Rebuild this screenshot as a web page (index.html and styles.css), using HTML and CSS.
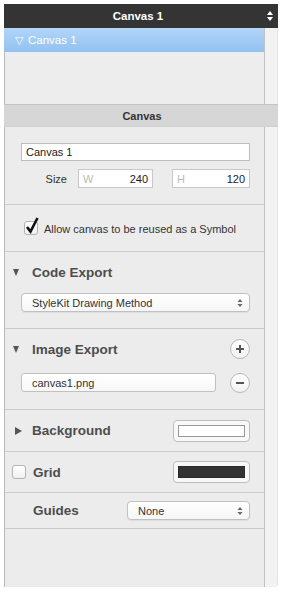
FILE: index.html
```html
<!DOCTYPE html>
<html>
<head>
<meta charset="utf-8">
<link rel="stylesheet" href="styles.css">
</head>
<body>
<div class="panel">
  <div class="titlebar">
    <span class="title">Canvas 1</span>
    <svg class="title-arrows" width="6" height="10" viewBox="0 0 6 10"><path d="M3 0 L6 4 L0 4 Z M0 6 L6 6 L3 10 Z" fill="#ffffff"/></svg>
  </div>
  <div class="outline-wrap">
    <div class="outline">
      <div class="outline-row"><span class="open-tri">▽</span><span>Canvas 1</span></div>
    </div>
    <div class="gutter"></div>
  </div>
  <div class="section-header">Canvas</div>
  <div class="inspector-wrap">
    <div class="inspector">
      <div class="sec sec-name">
        <div class="text-field">Canvas 1</div>
        <div class="size-row">
          <span class="size-label">Size</span>
          <div class="num-field w"><span class="ph">W</span><span>240</span></div>
          <div class="num-field h"><span class="ph">H</span><span>120</span></div>
        </div>
      </div>
      <div class="sec sec-check">
        <span class="checkbox checked">
          <svg width="16" height="18" viewBox="0 0 16 18"><path d="M3 10 L6.5 14.5 L13.5 1" fill="none" stroke="#111" stroke-width="2.6" stroke-linejoin="miter"/></svg>
        </span>
        <span class="check-label">Allow canvas to be reused as a Symbol</span>
      </div>
      <div class="sec sec-code">
        <div class="sec-title"><span class="tri-down"></span><span>Code Export</span></div>
        <div class="select wide"><span>StyleKit Drawing Method</span>
          <svg width="6" height="10" viewBox="0 0 6 10"><path d="M3 1 L5.5 4 L0.5 4 Z M0.5 6 L5.5 6 L3 9 Z" fill="#666"/></svg>
        </div>
      </div>
      <div class="sec sec-image">
        <div class="sec-title"><span class="tri-down"></span><span class="grow">Image Export</span><span class="round-btn">
          <svg width="10" height="10" viewBox="0 0 10 10"><path d="M5 1 V9 M1 5 H9" stroke="#555" stroke-width="2"/></svg></span></div>
        <div class="file-row"><div class="file-field">canvas1.png</div><span class="round-btn">
          <svg width="10" height="10" viewBox="0 0 10 10"><path d="M1 5 H9" stroke="#555" stroke-width="2"/></svg></span></div>
      </div>
      <div class="sec sec-bg">
        <span class="tri-right"></span><span class="big-label grow">Background</span>
        <span class="well"><span class="well-inner white"></span></span>
      </div>
      <div class="sec sec-grid">
        <span class="checkbox"></span><span class="big-label grow">Grid</span>
        <span class="well"><span class="well-inner dark"></span></span>
      </div>
      <div class="sec sec-guides">
        <span class="big-label guides-label">Guides</span>
        <div class="select guides"><span>None</span>
          <svg width="6" height="10" viewBox="0 0 6 10"><path d="M3 1 L5.5 4 L0.5 4 Z M0.5 6 L5.5 6 L3 9 Z" fill="#666"/></svg>
        </div>
      </div>
      <div class="filler"></div>
    </div>
    <div class="gutter bottom"></div>
  </div>
</div>
</body>
</html>
```
FILE: styles.css
```css
* { box-sizing: border-box; }
html, body { margin: 0; padding: 0; background: #ffffff; }
body {
  font-family: "Liberation Sans", Arial, sans-serif;
  font-size: 11px;
  color: #333;
}
.panel {
  margin: 4px 0 0 4px;
  width: 274px;
}
.titlebar {
  height: 24px;
  background: #343434;
  display: flex;
  align-items: center;
  justify-content: center;
  padding-right: 6px;
  position: relative;
}
.title {
  color: #fff;
  font-weight: bold;
  font-size: 11.5px;
}
.title-arrows {
  position: absolute;
  right: 5px;
  top: 7px;
}
.outline-wrap, .inspector-wrap {
  display: flex;
}
.outline {
  width: 261px;
  height: 76px;
  background: #ededed;
  border-left: 1px solid #b9b9b9;
  border-right: 1px solid #c2c2c2;
}
.outline-row {
  height: 24px;
  margin-left: -1px;
  background: linear-gradient(#b2d5f8, #92c1f1);
  color: #fff;
  font-size: 11.5px;
  display: flex;
  align-items: center;
  padding-left: 11px;
  gap: 5px;
}
.open-tri { font-size: 11px; }
.gutter {
  width: 13px;
  background: #f2f2f2;
  border-right: 1px solid #e6e6e6;
}
.gutter.bottom { border-bottom-right-radius: 4px; }
.section-header {
  height: 23px;
  background: #d6d6d6;
  border-top: 1px solid #c4c4c4;
  border-bottom: 1px solid #cfcfcf;
  display: flex;
  align-items: center;
  justify-content: center;
  font-weight: bold;
  color: #333;
  padding-left: 2px;
}
.inspector {
  width: 261px;
  background: #ececec;
  border-left: 1px solid #b9b9b9;
  border-right: 1px solid #c2c2c2;
  display: flex;
  flex-direction: column;
}
.sec {
  border-bottom: 1px solid #cacaca;
  padding: 0 14px 0 16px;
}
.sec-name {
  height: 78px;
  padding-top: 16px;
  display: flex;
  flex-direction: column;
  gap: 8px;
}
.text-field {
  height: 18px;
  background: #fff;
  border: 1px solid #bdbdbd;
  padding-left: 4px;
  display: flex;
  align-items: center;
  color: #222;
}
.size-row {
  display: flex;
  justify-content: flex-end;
  align-items: center;
  height: 19px;
}
.size-label { margin-right: 11px; color: #333; }
.num-field {
  height: 19px;
  background: #fff;
  border: 1px solid #c8c8c8;
  display: flex;
  align-items: center;
  justify-content: space-between;
  padding: 0 4px 0 4px;
  color: #222;
}
.num-field.w { width: 75px; margin-right: 19px; }
.num-field.h { width: 78px; }
.ph { color: #bbb; }
.sec-check {
  height: 47px;
  display: flex;
  align-items: center;
  padding-left: 19px;
  gap: 6px;
}
.checkbox {
  width: 14px;
  height: 14px;
  border: 1px solid #b3b3b3;
  border-radius: 3px;
  background: linear-gradient(#ffffff, #f0f0f0);
  position: relative;
  flex: none;
}
.checkbox svg {
  position: absolute;
  left: -1px;
  top: -5px;
}
.check-label { color: #333; margin-top: 1px; }
.sec-title {
  height: 20px;
  display: flex;
  align-items: center;
  padding-left: 0;
  margin-left: -8px;
  font-size: 13.5px;
  font-weight: bold;
  color: #4d4d4d;
}
.tri-down {
  width: 0; height: 0;
  border-left: 3.5px solid transparent;
  border-right: 3.5px solid transparent;
  border-top: 7px solid #555;
  margin-right: 13px;
}
.tri-right {
  width: 0; height: 0;
  border-top: 4px solid transparent;
  border-bottom: 4px solid transparent;
  border-left: 7px solid #555;
  margin-left: -6px;
  margin-right: 10px;
}
.grow { flex: 1; }
.sec-code {
  height: 77px;
  padding-top: 10px;
  display: flex;
  flex-direction: column;
  gap: 11px;
}
.select {
  height: 19px;
  background: linear-gradient(#ffffff, #f6f6f6);
  border: 1px solid #c0c0c0;
  border-radius: 4px;
  box-shadow: 0 1px 0 rgba(0,0,0,0.06);
  display: flex;
  align-items: center;
  justify-content: space-between;
  padding: 0 6px 0 10px;
  color: #333;
}
.sec-image {
  height: 81px;
  padding-top: 10px;
  display: flex;
  flex-direction: column;
  gap: 14px;
}
.round-btn {
  width: 20px;
  height: 20px;
  border-radius: 50%;
  border: 1px solid #b8b8b8;
  background: linear-gradient(#ffffff, #f2f2f2);
  display: flex;
  align-items: center;
  justify-content: center;
  flex: none;
}
.file-row {
  display: flex;
  align-items: center;
  justify-content: space-between;
  height: 19px;
}
.file-field {
  width: 195px;
  height: 19px;
  border: 1px solid #c0c0c0;
  border-radius: 3px;
  background: linear-gradient(#ffffff, #f7f7f7);
  display: flex;
  align-items: center;
  padding-left: 10px;
  color: #333;
}
.big-label {
  font-size: 13.5px;
  font-weight: bold;
  color: #4d4d4d;
}
.sec-bg {
  height: 42px;
  display: flex;
  align-items: center;
}
.well {
  width: 77px;
  height: 22px;
  border: 1px solid #bdbdbd;
  border-radius: 4px;
  background: #f8f8f8;
  padding: 4px;
  display: flex;
}
.well-inner { flex: 1; border: 1px solid #9a9a9a; }
.well-inner.white { background: #fff; }
.well-inner.dark { background: #333; border-color: #2a2a2a; }
.sec-grid {
  height: 41px;
  display: flex;
  align-items: center;
  padding-left: 7px;
}
.sec-grid .checkbox { margin-right: 7px; }
.sec-guides {
  height: 36px;
  display: flex;
  align-items: center;
  padding-left: 28px;
}
.guides-label { width: 94px; }
.select.guides { width: 123px; }
.filler { height: 58px; }
```
